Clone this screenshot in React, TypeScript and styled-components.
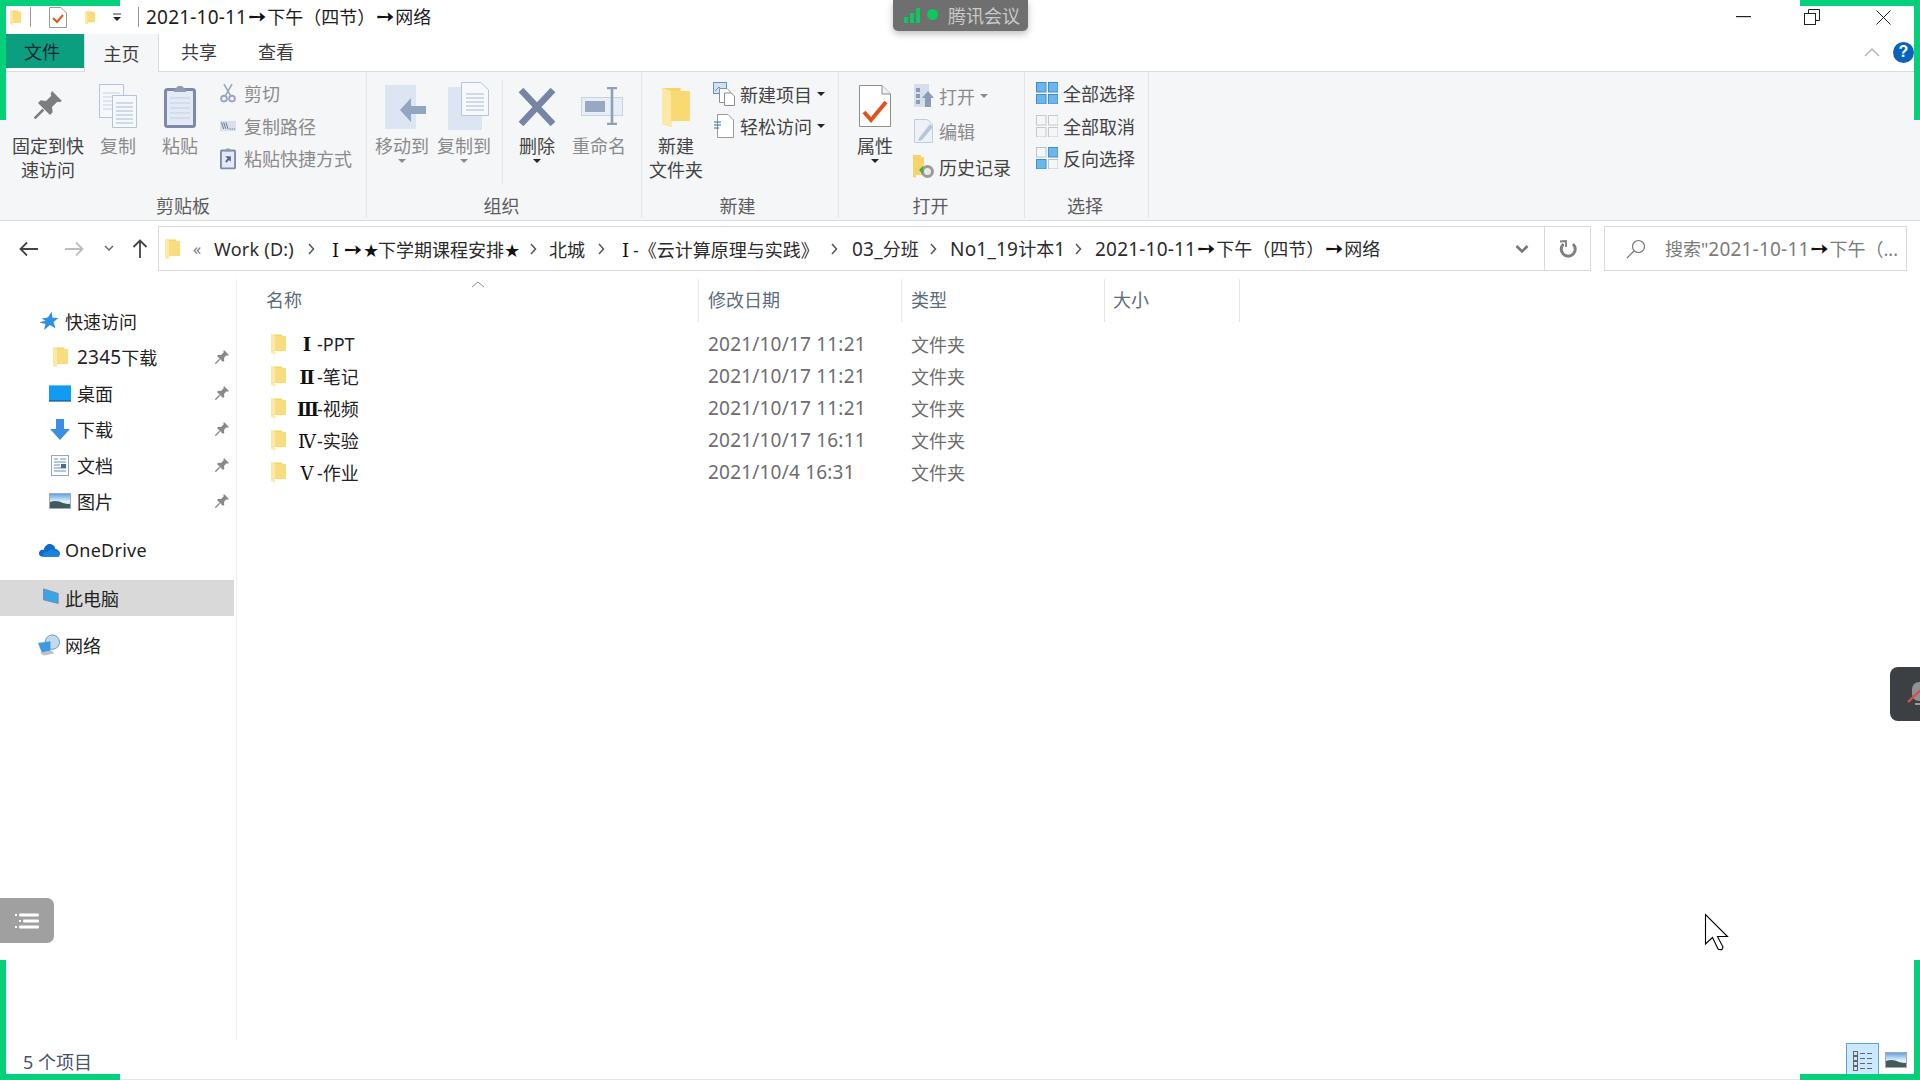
import React from "react";
import styled, { createGlobalStyle } from "styled-components";

const GlobalStyle = createGlobalStyle`
  html, body { margin: 0; padding: 0; background: #fff; }
  body { font-family: "Noto Sans", "Noto Sans CJK SC", "DejaVu Sans", sans-serif; font-size: 18px; color: #2b2b2b; }
`;

const Screen = styled.div`
  position: relative; width: 1920px; height: 1080px; overflow: hidden;
  display: flex; flex-direction: column; background: #fff;
`;
const Lat = styled.span`font-size: 19px; letter-spacing: 0.2px;`;
const Soft = styled.span`letter-spacing: 0.25px;`;
const Arrow = styled.span`
  font-family: "DejaVu Sans", sans-serif; display: inline-block; width: 20px; text-align: center; color: #111; font-size: 22px; line-height: 18px; font-weight: 700;
`;
const StarChar = styled.span`
  font-family: "DejaVu Sans", sans-serif; display: inline-block; width: 15px; text-align: center; font-size: 18px; line-height: 18px; color: #111;
`;
const Roman = styled.span<{ $thin?: boolean }>`
  font-family: "DejaVu Serif", serif; display: inline-block; width: 20px; text-align: center; color: #111; font-size: 18px;
  font-weight: ${p => (p.$thin ? 400 : 700)};
`;
const CrumbRoman = styled(Roman)`width: 15px; font-weight: 400;`;

/* ---------- title bar ---------- */
const TitleBar = styled.div`height: 34px; display: flex; align-items: center; flex: none;`;
const QuickIcons = styled.div`display: flex; align-items: center; width: 146px; height: 34px;`;
const QuickSlot = styled.div<{ $w: number }>`width: ${p => p.$w}px; display: flex; justify-content: center; align-items: center;`;
const ThinLine = styled.div`width: 1px; height: 20px; background: #9a9a9a; flex: none;`;
const WindowTitle = styled.div`flex: 1; color: #1c1c1c; white-space: nowrap; line-height: 34px;`;
const WinControls = styled.div`display: flex; align-items: center; padding-right: 29px;`;
const WinButton = styled.div<{ $mr: number }>`margin-right: ${p => p.$mr}px; display: flex;`;

/* ---------- tabs ---------- */
const TabBar = styled.div`height: 37px; display: flex; flex: none; position: relative; align-items: flex-start;`;
const FileTab = styled.div`
  margin-left: 6px; width: 78px; height: 34px; background: #0c9f7f; color: #123; padding-right: 6px; box-sizing: border-box;
  display: flex; align-items: center; justify-content: center;
`;
const HomeTab = styled.div`
  width: 75px; height: 38px; background: #f5f6f7; color: #3c3c3c; border: 1px solid #dadbdc; border-width: 0 1px;
  box-sizing: border-box; display: flex; align-items: center; justify-content: center; z-index: 1;
`;
const PlainTab = styled.div`padding: 0 19px 0 22px; height: 36px; line-height: 36px; color: #3c3c3c;`;
const RibbonTools = styled.div`margin-left: auto; display: flex; align-items: center; height: 36px; padding-right: 6px; gap: 13px;`;
const Help = styled.div`
  width: 21px; height: 21px; border-radius: 50%; background: #0b62bd; color: #fff; font-weight: 700; font-size: 16px;
  display: flex; align-items: center; justify-content: center; font-family: "Liberation Sans", sans-serif;
`;

/* ---------- ribbon ---------- */
const Ribbon = styled.div`
  height: 150px; box-sizing: border-box; flex: none; display: flex; background: #f5f6f7;
  border-top: 1px solid #dadbdc; border-bottom: 1px solid #dadbdc;
`;
const Group = styled.div<{ $w: number }>`
  width: ${p => p.$w}px; flex: none; box-sizing: border-box; border-right: 1px solid #e3e4e5; margin-bottom: 2px;
  display: flex; flex-direction: column;
`;
const GroupBody = styled.div<{ $pl?: number }>`height: 122px; display: flex; padding-left: ${p => p.$pl ?? 0}px;`;
const GroupLabel = styled.div<{ $pr?: number }>`
  height: 24px; line-height: 24px; text-align: center; color: #5c5c5c; padding-right: ${p => p.$pr ?? 0}px;
`;
const LargeButton = styled.div<{ $w: number }>`
  width: ${p => p.$w}px; flex: none; display: flex; flex-direction: column; align-items: center; position: relative;
`;
const LargeIcon = styled.div<{ $pt: number; $dx?: number }>`
  height: 62px; box-sizing: border-box; padding-top: ${p => p.$pt}px; padding-left: ${p => (p.$dx ?? 0) * 2}px;
  display: flex; justify-content: center;
`;
const LargeLabel = styled.div<{ $muted?: boolean }>`
  line-height: 24px; text-align: center; white-space: nowrap; color: ${p => (p.$muted ? "#8b8b8b" : "#444")};
`;
const Caret = styled.span<{ $muted?: boolean }>`
  display: inline-block; width: 0; height: 0; border-style: solid; border-width: 4px 4px 0 4px;
  border-color: ${p => (p.$muted ? "#8b8b8b" : "#222")} transparent transparent transparent; flex: none;
`;
const LargeCaret = styled(Caret)`margin-top: 1px;`;
const GroupDivider = styled.div`width: 1px; height: 104px; margin: 8px 0 0 11px; background: #e3e4e5; flex: none;`;
const SmallColumn = styled.div<{ $pt: number }>`display: flex; flex-direction: column; padding-top: ${p => p.$pt}px;`;
const SmallRow = styled.div<{ $h: number; $muted?: boolean }>`
  height: ${p => p.$h}px; display: flex; align-items: center; white-space: nowrap;
  color: ${p => (p.$muted ? "#8b8b8b" : "#444")};
`;
const SmallIcon = styled.div<{ $w: number; $gap: number }>`
  width: ${p => p.$w}px; margin-right: ${p => p.$gap}px; flex: none; display: flex; justify-content: center;
`;
const RowCaret = styled(Caret)`margin-left: 5px;`;

/* ---------- address row ---------- */
const AddressRow = styled.div`height: 45px; margin-top: 5px; display: flex; flex: none; padding-right: 13px;`;
const NavButton = styled.div<{ $w: number }>`width: ${p => p.$w}px; flex: none; display: flex; align-items: center; justify-content: center;`;
const NavEnd = styled.div`width: 6px; flex: none;`;
const AddressBox = styled.div`
  width: 1433px; flex: none; box-sizing: border-box; border: 1px solid #d9d9d9; display: flex; align-items: center; padding-left: 6px;
`;
const Chevrons = styled.div`width: 34px; flex: none; text-align: center; color: #777; font-size: 16px; line-height: 20px;`;
const Crumb = styled.div<{ $w: number }>`width: ${p => p.$w}px; flex: none; white-space: nowrap; color: #2b2b2b; overflow: visible;`;
const CrumbSep = styled.div<{ $w: number }>`width: ${p => p.$w}px; flex: none; display: flex; justify-content: center;`;
const AddressTail = styled.div`margin-left: auto; display: flex; align-items: center; height: 100%;`;
const DropSlot = styled.div`width: 44px; display: flex; justify-content: center;`;
const RefreshSlot = styled.div`
  width: 45px; height: 100%; display: flex; align-items: center; justify-content: center; border-left: 1px solid #d9d9d9;
`;
const SearchBox = styled.div`
  margin-left: 13px; flex: 1; box-sizing: border-box; border: 1px solid #d9d9d9; display: flex; align-items: center;
  padding-left: 21px; color: #7b7b7b; white-space: nowrap; overflow: hidden;
`;
const SearchText = styled.div`margin-left: 19px;`;

/* ---------- body ---------- */
const Body = styled.div`flex: 1; display: flex; margin-top: 8px; min-height: 0;`;
const Sidebar = styled.div`
  width: 237px; flex: none; box-sizing: border-box; border-right: 1px solid #f0f0f0; padding: 24px 2px 0 0;
  display: flex; flex-direction: column;
`;
const NavGroup = styled.div<{ $mb: number }>`margin-bottom: ${p => p.$mb}px;`;
const NavRow = styled.div<{ $indent: number; $selected?: boolean }>`
  height: 36px; display: flex; align-items: center; padding-left: ${p => p.$indent}px; padding-right: 4px;
  background: ${p => (p.$selected ? "#d9d9d9" : "transparent")}; color: #222;
`;
const NavIcon = styled.div<{ $gap: number }>`width: 22px; margin-right: ${p => p.$gap}px; flex: none; display: flex; justify-content: center;`;
const NavPin = styled.div`margin-left: auto; display: flex;`;

const Main = styled.div`flex: 1; display: flex; flex-direction: column;`;
const HeaderRow = styled.div`display: grid; grid-template-columns: 462px 203px 203px 135px; width: 1003px; height: 41px;`;
const HeaderCell = styled.div<{ $pl: number }>`
  position: relative; padding-left: ${p => p.$pl}px; line-height: 43px; color: #5b6b7b; border-right: 1px solid #e5e5e5; box-sizing: border-box;
`;
const SortCaret = styled.svg`position: absolute; left: 234px; top: 1px;`;
const FileRows = styled.div`padding-top: 8px;`;
const FileRow = styled.div`display: grid; grid-template-columns: 462px 203px 203px; height: 32px; align-items: center;`;
const NameCell = styled.div`display: flex; align-items: center; padding-left: 34px; color: #222;`;
const Name = styled.div`margin-left: 11px; white-space: nowrap;`;
const DetailCell = styled.div<{ $pl: number }>`padding-left: ${p => p.$pl}px; color: #6d6d6d; white-space: nowrap;`;

const StatusBar = styled.div`
  height: 40px; flex: none; box-sizing: border-box; border-bottom: 1px solid #e6e6e6; padding: 3px 13px 1px 23px;
  display: flex; align-items: center; color: #44546a;
`;
const ViewButtons = styled.div`margin-left: auto; display: flex; align-items: flex-end; height: 36px; gap: 6px;`;
const DetailsView = styled.div`
  width: 33px; height: 36px; box-sizing: border-box; background: #cce8ff; border: 1px solid #5aa6cf; display: flex; justify-content: center; align-items: center;
`;
const PreviewView = styled.div`display: flex; height: 36px; align-items: flex-start; padding-top: 9px; box-sizing: border-box;`;

/* ---------- overlays ---------- */
const Corner = styled.div<{ $v: "top" | "bottom"; $h: "left" | "right" }>`
  position: absolute; ${p => p.$v}: 0; ${p => p.$h}: 0; width: 120px; height: 120px; box-sizing: border-box; pointer-events: none; z-index: 5;
  border-${p => p.$v}: 6px solid #05d07a; border-${p => p.$h}: 6px solid #05d07a;
`;
const MeetingPill = styled.div`
  position: absolute; left: 893px; top: 0; width: 135px; height: 31px; background: #6f6f6f; border-radius: 0 0 5px 5px;
  box-shadow: 0 3px 7px rgba(0,0,0,.25); display: flex; align-items: center; padding: 0 0 2px 11px; box-sizing: border-box; color: #c9c9c9; gap: 6px; z-index: 6;
`;
const MeetingDot = styled.div`width: 11px; height: 11px; border-radius: 50%; background: #0dc75f; margin-right: 4px;`;
const OutlineButton = styled.div`
  position: absolute; left: 0; top: 898px; width: 54px; height: 45px; background: #a0a0a0; border-radius: 0 7px 7px 0;
  display: flex; align-items: center; justify-content: center; z-index: 6;
`;
const MicButton = styled.div`
  position: absolute; left: 1890px; top: 667px; width: 30px; height: 54px; background: #3d4043; border-radius: 8px 0 0 8px;
  overflow: hidden; z-index: 6;
`;
const MicGlyph = styled.svg`position: absolute; left: 16px; top: 15px;`;
const Cursor = styled.svg`position: absolute; left: 1704px; top: 913px; z-index: 7;`;

/* ---------- icons ---------- */
const Folder = ({ w = 15, h = 20 }: { w?: number; h?: number }) => (
  <svg width={w} height={h} viewBox="0 0 15 20">
    <path d="M0 0.5 L11 0.5 L11 2 L14.8 2 L14.8 17 L4 17 L4 20 L0 19 Z" fill="#f7d36c" />
    <path d="M0 0.5 L4 1.5 L4 20 L0 19 Z" fill="#fce9a6" />
    <path d="M4 2 L14.8 2 L14.8 17 L4 17 Z" fill="#f9dc7e" />
  </svg>
);
const Pin = ({ size = 32, c = "#7d7d7d" }: { size?: number; c?: string }) => (
  <svg width={size} height={size} viewBox="0 0 24 24">
    <path d="M15 1.5 L22.5 9 L20.5 10 L19 9.5 L15 13.5 L15.5 17.5 L13.5 19.5 L4.5 10.5 L6.5 8.5 L10.5 9 L14.5 5 L14 3.5 Z" fill={c} />
    <path d="M8.5 15.5 L2 22" stroke={c} strokeWidth="2" />
  </svg>
);
const DocLines = ({ x, y, w, h, c = "#b4c4da" }: { x: number; y: number; w: number; h: number; c?: string }) => (
  <path d={`M${x} ${y}h${w}v${h}h${-w}z`} fill="#f6f8fb" stroke={c} strokeWidth="1" />
);
const CopyIcon = () => (
  <svg width="38" height="44" viewBox="0 0 38 44">
    <DocLines x={0.5} y={0.5} w={24} h={33} />
    <path d="M4 9h17M4 13h17M4 17h17M4 21h17M4 25h17" stroke="#c6d2e3" />
    <DocLines x={13.5} y={11.5} w={24} h={32} />
    <path d="M17 19h17M17 23h17M17 27h17M17 31h17M17 35h17M17 39h17" stroke="#a9bad2" />
  </svg>
);
const PasteIcon = () => (
  <svg width="32" height="44" viewBox="0 0 32 44">
    <rect x="1.5" y="5.5" width="29" height="37" rx="2" fill="#e4eaf5" stroke="#7e8aa7" strokeWidth="3" />
    <path d="M10 6 L14 2 H18 L22 6 V8 H10 Z" fill="#8f9ab3" />
    <path d="M6 14h20M6 19h20M6 24h20M6 29h20M6 34h20" stroke="#c4cfe2" />
  </svg>
);
const ScissorsIcon = () => (
  <svg width="20" height="24" viewBox="0 0 20 24" fill="none" stroke="#98a6c0" strokeWidth="2">
    <path d="M5 1 L13 15 M15 1 L7 15" />
    <circle cx="5" cy="19" r="3.6" strokeWidth="2.4" />
    <circle cx="15" cy="19" r="3.6" strokeWidth="2.4" />
  </svg>
);
const CopyPathIcon = () => (
  <svg width="22" height="14" viewBox="0 0 22 14">
    <rect width="22" height="14" fill="#d8dfee" />
    <path d="M2 2 L5 11 M5 2 L8 11 M8 2 L11 11" stroke="#5b6880" strokeWidth="1.2" />
    <path d="M13 11h1.5M16 11h1.5M19 11h1.5" stroke="#5b6880" strokeWidth="1.4" />
  </svg>
);
const ShortcutIcon = () => (
  <svg width="17" height="23" viewBox="0 0 17 23">
    <rect x="1" y="3" width="15" height="19" rx="1" fill="#e4eaf5" stroke="#7e8aa7" strokeWidth="2" />
    <path d="M5 3 L7 1 H10 L12 3 V4 H5 Z" fill="#8f9ab3" />
    <path d="M5.5 9h6v6l-2-2-2.5 3-1.5-1.5 2.5-3z" fill="#56688a" />
  </svg>
);
const MoveIcon = () => (
  <svg width="42" height="44" viewBox="0 0 42 44">
    <rect x="0" y="0" width="31" height="44" fill="#dde5f2" />
    <path d="M41 21 H26 V13 L15 25 L26 37 V29 H41 Z" fill="#93a6c1" />
  </svg>
);
const CopyToIcon = () => (
  <svg width="42" height="48" viewBox="0 0 42 48">
    <rect x="0" y="5" width="34" height="43" fill="#dde5f2" />
    <path d="M13.5 0.5 H33 L40.5 8 V33.5 H13.5 Z" fill="#f6f8fb" stroke="#b4c4da" />
    <path d="M18 12h18M18 16h18M18 20h18M18 24h18M18 28h18" stroke="#a9bad2" />
  </svg>
);
const DeleteIcon = () => (
  <svg width="38" height="38" viewBox="0 0 38 38">
    <path d="M3 2 L35 36 M35 2 L3 36" stroke="#7685a6" strokeWidth="6.5" />
  </svg>
);
const RenameIcon = () => (
  <svg width="42" height="38" viewBox="0 0 42 38">
    <rect x="0.5" y="10.5" width="41" height="18" fill="#e8eef6" stroke="#c6d3e5" />
    <rect x="4" y="14" width="20" height="11" fill="#98a8c2" />
    <path d="M26 1 H36 M31 1 V37 M26 37 H36" stroke="#929fb8" strokeWidth="2.6" fill="none" />
  </svg>
);
const NewFolderIcon = () => (
  <svg width="28" height="40" viewBox="0 0 15 20" preserveAspectRatio="none">
    <path d="M0 0.5 L10 0.5 L10 2 L14.8 2 L14.8 17 L5 17 L5 20 L0 18.5 Z" fill="#f7d36c" />
    <path d="M0 0.5 L5 2 L5 20 L0 18.5 Z" fill="#fce9a6" />
    <path d="M5 2 L14.8 2 L14.8 17 L5 17 Z" fill="#f9d972" />
  </svg>
);
const NewItemIcon = () => (
  <svg width="22" height="24" viewBox="0 0 22 24">
    <rect x="0.5" y="0.5" width="13" height="11" fill="#cfe2f3" stroke="#6f93b5" />
    <path d="M2 9 L6 5 L9 8 L11 6" stroke="#6f93b5" fill="none" />
    <path d="M6.5 6.5 H14 L17 9.5 V20.5 H6.5 Z" fill="#fff" stroke="#8f8f8f" />
    <path d="M11.5 11 H18 L21.5 14 V23.5 H11.5 Z" fill="#fff" stroke="#8f8f8f" />
  </svg>
);
const EasyIcon = () => (
  <svg width="20" height="24" viewBox="0 0 20 24">
    <path d="M3.5 0.5 H14 L19.5 6 V23.5 H3.5 Z" fill="#fff" stroke="#9a9a9a" />
    <path d="M0 8h7M0 11h7M0 14h5" stroke="#2f6fb3" strokeWidth="1.2" />
  </svg>
);
const PropsIcon = () => (
  <svg width="32" height="44" viewBox="0 0 32 44">
    <path d="M0.5 0.5 H23 L31.5 9 V41.5 H0.5 Z" fill="#fff" stroke="#8e8e8e" />
    <path d="M23 0.5 V9 H31.5" fill="#f0f0f0" stroke="#8e8e8e" />
    <path d="M5 27 L12 35 L27 17" stroke="#e0531f" strokeWidth="4" fill="none" />
  </svg>
);
const OpenIcon = () => (
  <svg width="20" height="24" viewBox="0 0 20 24">
    <rect x="0" y="0" width="15" height="23" fill="#d6deec" />
    <path d="M2 4h4v4H2zM2 10h4v4H2zM2 16h4v4H2z" fill="#8c9bb8" />
    <path d="M14 7 L20 14 H17 V23 H11 V14 H8 Z" fill="#8c9bb8" />
  </svg>
);
const EditIcon = () => (
  <svg width="20" height="24" viewBox="0 0 20 24">
    <path d="M0.5 0.5 H13 L18.5 5 V23.5 H0.5 Z" fill="#eef2f8" stroke="#c0cce0" />
    <path d="M5 19 L16 5 L19 8 L8 21 L4 22 Z" fill="#b8c6dc" />
  </svg>
);
const HistoryIcon = () => (
  <svg width="22" height="24" viewBox="0 0 22 24">
    <path d="M0 0 H8 V2 H11 V20 H3 V23 L0 22 Z" fill="#f7d36c" />
    <circle cx="14.5" cy="16.5" r="6.5" fill="#9b9b9b" />
    <circle cx="14.5" cy="16.5" r="3.5" fill="#e9e9e9" />
    <path d="M6 15 L10 11 V19 Z" fill="#3fae3f" />
  </svg>
);
const GridIcon = ({ mode }: { mode: "all" | "none" | "invert" }) => {
  const cells: [number, number, boolean][] = mode === "all"
    ? [[0, 0, true], [12, 0, true], [0, 12, true], [12, 12, true]]
    : mode === "none"
      ? [[0, 0, false], [12, 0, false], [0, 12, false], [12, 12, false]]
      : [[0, 0, false], [12, 0, true], [0, 12, true], [12, 12, false]];
  return (
    <svg width="22" height="22" viewBox="0 0 22 22">
      {cells.map(([x, y, on]) => (
        <rect key={`${x}-${y}`} x={x + 0.5} y={y + 0.5} width="9.5" height="9.5"
          fill={on ? "#6db6ec" : "#f5f6f7"} stroke={on ? "#3f8fcb" : mode === "none" ? "#c9c9c9" : "#b5c4d6"} />
      ))}
    </svg>
  );
};
const Star = () => (
  <svg width="20" height="20" viewBox="0 0 20 20">
    <path d="M12.5 0.5 L13.5 6.8 L19.5 7 L14.5 11 L16.5 17.5 L11 14 L5 19 L6.5 13 L0.5 11.5 L6.5 9.5 L2.5 7.5 L9 6.5 Z" fill="#2f8fe3" />
  </svg>
);
const DesktopIcon = () => (
  <svg width="23" height="17" viewBox="0 0 23 17"><rect width="23" height="16" fill="#129bf2" /><rect y="15.5" width="23" height="1.5" fill="#0d5f9a" /></svg>
);
const DownloadIcon = () => (
  <svg width="20" height="21" viewBox="0 0 20 21"><path d="M6 0 H14 V10 H20 L10 21 L0 10 H6 Z" fill="#3d8ee3" /></svg>
);
const DocIcon = () => (
  <svg width="18" height="21" viewBox="0 0 18 21">
    <rect x="0.5" y="0.5" width="17" height="20" fill="#fafcff" stroke="#98a8bc" />
    <path d="M3 4h4M9 4h6M3 7h12M3 10h6M3 13h12M3 16h12" stroke="#6f8fb0" />
    <rect x="10" y="9" width="5" height="4" fill="#4b6a8c" />
  </svg>
);
const PictureIcon = ({ w = 22, h = 16 }: { w?: number; h?: number }) => (
  <svg width={w} height={h} viewBox="0 0 22 16">
    <defs><linearGradient id="sky" x1="0" y1="0" x2="0" y2="1"><stop offset="0" stopColor="#5b9fe6" /><stop offset="0.55" stopColor="#e8f2f8" /><stop offset="1" stopColor="#8aa" /></linearGradient></defs>
    <rect x="0.5" y="0.5" width="21" height="15" fill="url(#sky)" stroke="#a5a9b3" />
    <path d="M1 9 C6 7 10 8 14 10 C17 11 19 11 21 11 V15 H1 Z" fill="#3d5c5a" />
  </svg>
);
const CloudIcon = () => (
  <svg width="23" height="16" viewBox="0 0 23 16">
    <path d="M5 15 C1 15 0 11 2 9 C3 7.5 5 7.5 6 8 C7 3 11 1 14 2 C17 3 18 5 18 7 C21 7 23 10 23 12 C23 14 21 15 19 15 Z" fill="#0f6cc4" />
    <path d="M6 15 C4 12 7 9 10 10 C12 7 16 7 18 9 C21 9 23 11 22 15 Z" fill="#1a82e0" />
  </svg>
);
const PcIcon = () => (
  <svg width="24" height="22" viewBox="0 0 24 22">
    <path d="M6 1 L22 6 V17 L6 13 Z" fill="#3ba3e8" stroke="#6c8fab" />
    <path d="M1 19 L14 17 L20 20 L8 22 Z" fill="#d8dbe0" />
  </svg>
);
const NetworkIcon = () => (
  <svg width="23" height="22" viewBox="0 0 23 22">
    <circle cx="15" cy="8" r="7.5" fill="#c3d9ee" stroke="#6b93bd" />
    <path d="M0 9 L13 7 V17 L4 19 Z" fill="#3b9ae1" />
    <path d="M2 19 L14 17 L17 20 L6 22 Z" fill="#b8c0c9" />
  </svg>
);
const Chevron = ({ c = "#555", d = "M1 1 L5.5 6 L1 11", w = 8, h = 12, sw = 1.5 }: { c?: string; d?: string; w?: number; h?: number; sw?: number }) => (
  <svg width={w} height={h} viewBox={`0 0 ${w} ${h}`}><path d={d} stroke={c} strokeWidth={sw} fill="none" /></svg>
);

/* ---------- data ---------- */
const FolderTitle = () => <><Lat>2021-10-11</Lat><Arrow>➙</Arrow>下午（四节）<Arrow>➙</Arrow>网络</>;
const crumbs: { t: React.ReactNode; w: number; sep: number }[] = [
  { t: <Soft>Work (D:)</Soft>, w: 81, sep: 33 },
  { t: <><CrumbRoman>Ⅰ</CrumbRoman><Arrow>➙</Arrow><StarChar>★</StarChar>下学期课程安排<StarChar>★</StarChar></>, w: 190, sep: 31 },
  { t: "北城", w: 36, sep: 33 },
  { t: <><CrumbRoman>Ⅰ</CrumbRoman>-《云计算原理与实践》</>, w: 200, sep: 34 },
  { t: <><Lat>03_</Lat>分班</>, w: 66, sep: 32 },
  { t: <><Lat>No1_19</Lat>计本<Lat>1</Lat></>, w: 113, sep: 32 },
  { t: <FolderTitle />, w: 284, sep: 0 },
];
const pinned: { icon: React.ReactNode; key: string; label: React.ReactNode }[] = [
  { icon: <Folder w={15} h={20} />, key: "dl2345", label: <><Lat>2345</Lat>下载</> },
  { icon: <DesktopIcon />, key: "desktop", label: "桌面" },
  { icon: <DownloadIcon />, key: "dl", label: "下载" },
  { icon: <DocIcon />, key: "doc", label: "文档" },
  { icon: <PictureIcon />, key: "pic", label: "图片" },
];
const files: { roman: string; thin?: boolean; rest: string; date: string }[] = [
  { roman: "Ⅰ", rest: "-PPT", date: "2021/10/17 11:21" },
  { roman: "Ⅱ", rest: "-笔记", date: "2021/10/17 11:21" },
  { roman: "Ⅲ", rest: "-视频", date: "2021/10/17 11:21" },
  { roman: "Ⅳ", thin: true, rest: "-实验", date: "2021/10/17 16:11" },
  { roman: "Ⅴ", thin: true, rest: "-作业", date: "2021/10/4 16:31" },
];

export default function App() {
  return (
    <Screen>
      <GlobalStyle />
      <TitleBar>
        <QuickIcons>
          <QuickSlot $w={30}><Folder w={11} h={19} /></QuickSlot>
          <ThinLine />
          <QuickSlot $w={54}>
            <svg width="18" height="21" viewBox="0 0 18 21">
              <path d="M0.5 0.5 H12 L17.5 6 V20.5 H0.5 Z" fill="#fff" stroke="#999" />
              <path d="M4 11 L8 15 L14 8" stroke="#e0531f" strokeWidth="2" fill="none" />
            </svg>
          </QuickSlot>
          <QuickSlot $w={10}><Folder w={15} h={19} /></QuickSlot>
          <QuickSlot $w={43}>
            <svg width="10" height="9" viewBox="0 0 10 9"><path d="M1 1h8" stroke="#333" /><path d="M1 4 H9 L5 8 Z" fill="#222" /></svg>
          </QuickSlot>
          <ThinLine />
        </QuickIcons>
        <WindowTitle><FolderTitle /></WindowTitle>
        <WinControls>
          <WinButton $mr={53}>
            <svg width="15" height="2" viewBox="0 0 15 2"><rect width="15" height="1.2" fill="#222" /></svg>
          </WinButton>
          <WinButton $mr={56}>
            <svg width="16" height="16" viewBox="0 0 16 16" fill="none" stroke="#222">
              <rect x="0.5" y="4.5" width="11" height="11" /><path d="M4.5 4.5 V0.5 H15.5 V11.5 H11.5" />
            </svg>
          </WinButton>
          <WinButton $mr={0}>
            <svg width="15" height="15" viewBox="0 0 15 15"><path d="M0.5 0.5 L14.5 14.5 M14.5 0.5 L0.5 14.5" stroke="#222" /></svg>
          </WinButton>
        </WinControls>
      </TitleBar>

      <TabBar>
        <FileTab>文件</FileTab>
        <HomeTab>主页</HomeTab>
        <PlainTab>共享</PlainTab>
        <PlainTab>查看</PlainTab>
        <RibbonTools>
          <Chevron c="#b5b5b5" w={16} h={10} d="M1 9 L8 2 L15 9" />
          <Help>?</Help>
        </RibbonTools>
      </TabBar>

      <Ribbon>
        <Group $w={367}>
          <GroupBody>
            <LargeButton $w={96}><LargeIcon $pt={17}><Pin /></LargeIcon><LargeLabel>固定到快<br />速访问</LargeLabel></LargeButton>
            <LargeButton $w={44}><LargeIcon $pt={12}><CopyIcon /></LargeIcon><LargeLabel $muted>复制</LargeLabel></LargeButton>
            <LargeButton $w={80}><LargeIcon $pt={12}><PasteIcon /></LargeIcon><LargeLabel $muted>粘贴</LargeLabel></LargeButton>
            <SmallColumn $pt={5}>
              <SmallRow $h={32.5} $muted><SmallIcon $w={16} $gap={8}><ScissorsIcon /></SmallIcon>剪切</SmallRow>
              <SmallRow $h={32.5} $muted><SmallIcon $w={16} $gap={8}><CopyPathIcon /></SmallIcon>复制路径</SmallRow>
              <SmallRow $h={32} $muted><SmallIcon $w={16} $gap={8}><ShortcutIcon /></SmallIcon>粘贴快捷方式</SmallRow>
            </SmallColumn>
          </GroupBody>
          <GroupLabel>剪贴板</GroupLabel>
        </Group>
        <Group $w={275}>
          <GroupBody>
            <LargeButton $w={70}><LargeIcon $pt={13} $dx={4}><MoveIcon /></LargeIcon><LargeLabel $muted>移动到</LargeLabel><LargeCaret $muted /></LargeButton>
            <LargeButton $w={54}><LargeIcon $pt={10} $dx={5}><CopyToIcon /></LargeIcon><LargeLabel $muted>复制到</LargeLabel><LargeCaret $muted /></LargeButton>
            <GroupDivider />
            <LargeButton $w={68}><LargeIcon $pt={16}><DeleteIcon /></LargeIcon><LargeLabel>删除</LargeLabel><LargeCaret /></LargeButton>
            <LargeButton $w={56}><LargeIcon $pt={15} $dx={3}><RenameIcon /></LargeIcon><LargeLabel $muted>重命名</LargeLabel></LargeButton>
          </GroupBody>
          <GroupLabel $pr={5}>组织</GroupLabel>
        </Group>
        <Group $w={197}>
          <GroupBody>
            <LargeButton $w={68}><LargeIcon $pt={15}><NewFolderIcon /></LargeIcon><LargeLabel>新建<br />文件夹</LargeLabel></LargeButton>
            <SmallColumn $pt={6}>
              <SmallRow $h={32}><SmallIcon $w={28} $gap={2}><NewItemIcon /></SmallIcon>新建项目<RowCaret /></SmallRow>
              <SmallRow $h={32}><SmallIcon $w={28} $gap={2}><EasyIcon /></SmallIcon>轻松访问<RowCaret /></SmallRow>
            </SmallColumn>
          </GroupBody>
          <GroupLabel $pr={5}>新建</GroupLabel>
        </Group>
        <Group $w={186}>
          <GroupBody>
            <LargeButton $w={72}><LargeIcon $pt={13}><PropsIcon /></LargeIcon><LargeLabel>属性</LargeLabel><LargeCaret /></LargeButton>
            <SmallColumn $pt={6}>
              <SmallRow $h={35.5} $muted><SmallIcon $w={26} $gap={2}><OpenIcon /></SmallIcon>打开<RowCaret $muted /></SmallRow>
              <SmallRow $h={35.5} $muted><SmallIcon $w={26} $gap={2}><EditIcon /></SmallIcon>编辑</SmallRow>
              <SmallRow $h={35.5}><SmallIcon $w={26} $gap={2}><HistoryIcon /></SmallIcon>历史记录</SmallRow>
            </SmallColumn>
          </GroupBody>
          <GroupLabel $pr={2}>打开</GroupLabel>
        </Group>
        <Group $w={124}>
          <GroupBody $pl={6}>
            <SmallColumn $pt={5}>
              <SmallRow $h={32.5}><SmallIcon $w={32} $gap={0}><GridIcon mode="all" /></SmallIcon>全部选择</SmallRow>
              <SmallRow $h={32.5}><SmallIcon $w={32} $gap={0}><GridIcon mode="none" /></SmallIcon>全部取消</SmallRow>
              <SmallRow $h={32}><SmallIcon $w={32} $gap={0}><GridIcon mode="invert" /></SmallIcon>反向选择</SmallRow>
            </SmallColumn>
          </GroupBody>
          <GroupLabel $pr={3}>选择</GroupLabel>
        </Group>
      </Ribbon>

      <AddressRow>
        <NavButton $w={57}>
          <svg width="20" height="16" viewBox="0 0 20 16" fill="none" stroke="#444" strokeWidth="1.8"><path d="M19 8 H2 M8 1.5 L1.5 8 L8 14.5" /></svg>
        </NavButton>
        <NavButton $w={34}>
          <svg width="20" height="16" viewBox="0 0 20 16" fill="none" stroke="#bdbdbd" strokeWidth="1.8"><path d="M1 8 H18 M12 1.5 L18.5 8 L12 14.5" /></svg>
        </NavButton>
        <NavButton $w={36}><Chevron c="#666" w={10} h={7} d="M1 1 L5 5 L9 1" /></NavButton>
        <NavButton $w={25}>
          <svg width="16" height="20" viewBox="0 0 16 20" fill="none" stroke="#444" strokeWidth="1.8"><path d="M8 19 V2 M1.5 8 L8 1.5 L14.5 8" /></svg>
        </NavButton>
        <NavEnd />
        <AddressBox>
          <Folder w={15} h={20} />
          <Chevrons>«</Chevrons>
          {crumbs.map((c, i) => (
            <React.Fragment key={i}>
              <Crumb $w={c.w}>{c.t}</Crumb>
              {c.sep > 0 && <CrumbSep $w={c.sep}><Chevron /></CrumbSep>}
            </React.Fragment>
          ))}
          <AddressTail>
            <DropSlot><Chevron c="#777" w={14} h={10} sw={2.6} d="M1.5 2 L7 7.5 L12.5 2" /></DropSlot>
            <RefreshSlot>
              <svg width="18" height="20" viewBox="0 0 18 20" fill="none" stroke="#808080" strokeWidth="3">
                <path d="M4.5 5 A7 7 0 1 0 14 5" />
                <path d="M1 2.5 L7 2 L7 8" strokeWidth="1.8" />
              </svg>
            </RefreshSlot>
          </AddressTail>
        </AddressBox>
        <SearchBox>
          <svg width="20" height="20" viewBox="0 0 20 20" fill="none" stroke="#777" strokeWidth="1.2">
            <circle cx="12.5" cy="7.5" r="6" /><path d="M8 12 L1 19" />
          </svg>
          <SearchText>搜索"<Lat>2021-10-11</Lat><Arrow>➙</Arrow>下午（...</SearchText>
        </SearchBox>
      </AddressRow>

      <Body>
        <Sidebar>
          <NavGroup $mb={12.5}>
            <NavRow $indent={38}><NavIcon $gap={5}><Star /></NavIcon>快速访问</NavRow>
            {pinned.map(p => (
              <NavRow key={p.key} $indent={49}>
                <NavIcon $gap={6}>{p.icon}</NavIcon>{p.label}
                <NavPin><Pin size={16} c="#8a8a8a" /></NavPin>
              </NavRow>
            ))}
          </NavGroup>
          <NavGroup $mb={12.5}><NavRow $indent={38}><NavIcon $gap={5}><CloudIcon /></NavIcon><Soft>OneDrive</Soft></NavRow></NavGroup>
          <NavGroup $mb={11}><NavRow $indent={38} $selected><NavIcon $gap={5}><PcIcon /></NavIcon>此电脑</NavRow></NavGroup>
          <NavGroup $mb={0}><NavRow $indent={38}><NavIcon $gap={5}><NetworkIcon /></NavIcon>网络</NavRow></NavGroup>
        </Sidebar>
        <Main>
          <HeaderRow>
            <HeaderCell $pl={29}>名称
              <SortCaret width="14" height="8" viewBox="0 0 14 8"><path d="M1 7 L7 2 L13 7" stroke="#8a8a8a" fill="none" /></SortCaret>
            </HeaderCell>
            <HeaderCell $pl={9}>修改日期</HeaderCell>
            <HeaderCell $pl={9}>类型</HeaderCell>
            <HeaderCell $pl={8}>大小</HeaderCell>
          </HeaderRow>
          <FileRows>
            {files.map(f => (
              <FileRow key={f.roman}>
                <NameCell>
                  <Folder w={15} h={20} />
                  <Name><Roman $thin={f.thin}>{f.roman}</Roman>{f.rest}</Name>
                </NameCell>
                <DetailCell $pl={9}><Lat>{f.date}</Lat></DetailCell>
                <DetailCell $pl={9}>文件夹</DetailCell>
              </FileRow>
            ))}
          </FileRows>
        </Main>
      </Body>

      <StatusBar>
        5 个项目
        <ViewButtons>
          <DetailsView>
            <svg width="20" height="20" viewBox="0 0 20 20" fill="none" stroke="#666">
              <rect x="0.5" y="0.5" width="4" height="4" /><rect x="0.5" y="5.5" width="4" height="4" /><rect x="0.5" y="10.5" width="4" height="4" /><rect x="0.5" y="15.5" width="4" height="4" />
              <path d="M7 2.5h5M14 2.5h5M7 7.5h5M14 7.5h5M7 12.5h5M14 12.5h5M7 17.5h5M14 17.5h5" />
            </svg>
          </DetailsView>
          <PreviewView><PictureIcon w={22} h={16} /></PreviewView>
        </ViewButtons>
      </StatusBar>

      <Corner $v="top" $h="left" />
      <Corner $v="top" $h="right" />
      <Corner $v="bottom" $h="left" />
      <Corner $v="bottom" $h="right" />

      <MeetingPill>
        <svg width="17" height="16" viewBox="0 0 17 16"><rect x="0" y="10" width="4" height="6" fill="#0dc75f" /><rect x="6" y="6" width="4" height="10" fill="#0dc75f" /><rect x="12" y="1" width="4" height="15" fill="#0dc75f" /></svg>
        <MeetingDot />
        腾讯会议
      </MeetingPill>

      <OutlineButton>
        <svg width="26" height="20" viewBox="0 0 26 20" fill="#fff">
          <rect x="1" y="3" width="2" height="2" /><rect x="5" y="2.5" width="20" height="3" rx="1" />
          <rect x="5" y="9" width="2" height="2" /><rect x="9" y="8.5" width="16" height="3" rx="1" />
          <rect x="1" y="15" width="2" height="2" /><rect x="5" y="14.5" width="20" height="3" rx="1" />
        </svg>
      </OutlineButton>

      <MicButton>
        <MicGlyph width="24" height="26" viewBox="0 0 24 26">
          <rect x="6" y="0" width="14" height="19" rx="7" fill="#8f9295" />
          <path d="M2 20 L20 3" stroke="#d9504a" strokeWidth="2.4" />
          <rect x="9" y="21" width="12" height="2" fill="#9a9a9a" />
        </MicGlyph>
      </MicButton>

      <Cursor width="25" height="38" viewBox="0 0 25 38">
        <path d="M1.5 1.5 V31 L8.5 24.5 L14 36 Q15 37 18 36.5 L19 34 L13.5 23.5 L23.5 23.5 Z" fill="#fff" stroke="#000" strokeWidth="1.1" />
      </Cursor>
    </Screen>
  );
}
